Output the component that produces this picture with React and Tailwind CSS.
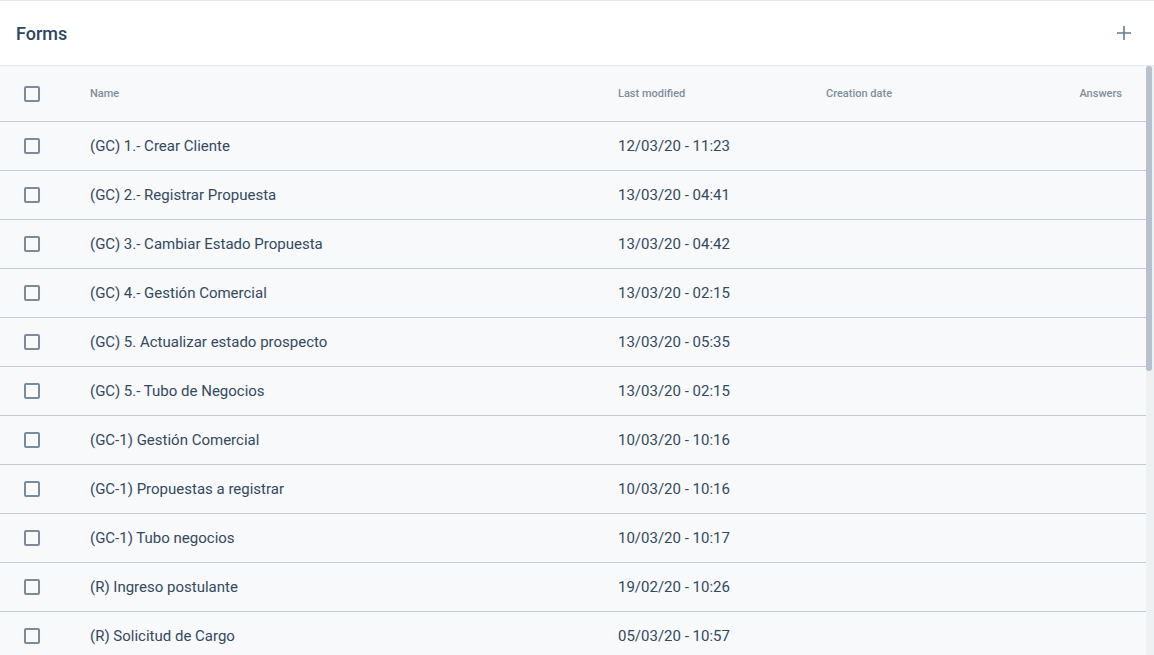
const forms = [
  ["(GC) 1.- Crear Cliente", "12/03/20 - 11:23"],
  ["(GC) 2.- Registrar Propuesta", "13/03/20 - 04:41"],
  ["(GC) 3.- Cambiar Estado Propuesta", "13/03/20 - 04:42"],
  ["(GC) 4.- Gestión Comercial", "13/03/20 - 02:15"],
  ["(GC) 5. Actualizar estado prospecto", "13/03/20 - 05:35"],
  ["(GC) 5.- Tubo de Negocios", "13/03/20 - 02:15"],
  ["(GC-1) Gestión Comercial", "10/03/20 - 10:16"],
  ["(GC-1) Propuestas a registrar", "10/03/20 - 10:16"],
  ["(GC-1) Tubo negocios", "10/03/20 - 10:17"],
  ["(R) Ingreso postulante", "19/02/20 - 10:26"],
  ["(R) Solicitud de Cargo", "05/03/20 - 10:57"],
];

const gridCols = "grid grid-cols-[90px_528px_208px_1fr_auto] items-center pr-[24px]";

function Checkbox() {
  return <span className="block w-[16px] h-[16px] ml-[24px] border-2 border-[#7a8c9c] rounded-[2px]" />;
}

export default function App() {
  return (
    <div
      className="h-[655px] flex flex-col bg-white border-t border-[#e6eaed] text-[#34495e] overflow-hidden"
      style={{ fontFamily: "Roboto, 'Noto Sans', sans-serif" }}
    >
      <div className="h-[65px] shrink-0 flex items-center justify-between pl-[16px] pr-[23px] border-b border-[#e6eaed]">
        <h1 className="text-[18px] font-medium text-[#2c4560]">Forms</h1>
        <svg width="14" height="14" viewBox="0 0 14 14" className="text-[#667c92]">
          <path d="M7 0v14M0 7h14" stroke="currentColor" strokeWidth="1.6" fill="none" />
        </svg>
      </div>
      <div className="flex-1 min-h-0 flex">
        <div className="flex-1 bg-[#f7f9fa] overflow-hidden">
          <div className={`${gridCols} h-[56px] border-b border-[#c3ccd4] text-[11px] font-medium text-[#7f8e9c]`}>
            <Checkbox />
            <span className="pt-[2px]">Name</span>
            <span className="pt-[2px]">Last modified</span>
            <span className="pt-[2px]">Creation date</span>
            <span className="pt-[2px] text-right">Answers</span>
          </div>
          {forms.map(([name, modified]) => (
            <div key={name} className={`${gridCols} h-[49px] border-b border-[#c3ccd4] text-[15px]`}>
              <Checkbox />
              <span>{name}</span>
              <span>{modified}</span>
              <span></span>
              <span></span>
            </div>
          ))}
        </div>
        {/* scrollbar */}
        <div className="w-[8px] shrink-0 bg-[#eef1f3] flex">
          <div className="w-[6px] h-[305px] bg-[#b6c1cb] rounded-[3px]" />
        </div>
      </div>
    </div>
  );
}
